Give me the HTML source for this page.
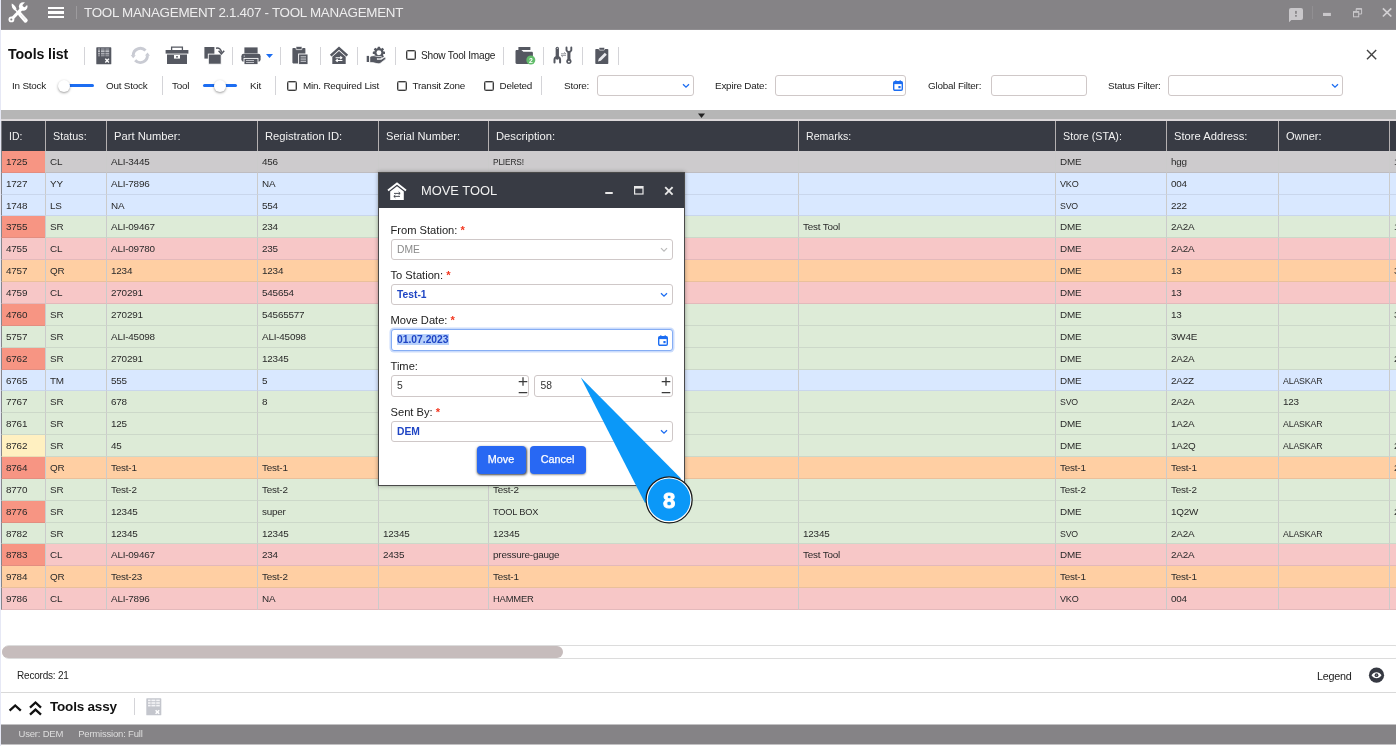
<!DOCTYPE html>
<html lang="en"><head><meta charset="utf-8"><title>Tool Management</title>
<style>
*{box-sizing:border-box;margin:0;padding:0}
html,body{width:1396px;height:746px;overflow:hidden;background:#fff;font-family:"Liberation Sans",sans-serif;color:#222}
.abs{position:absolute}
#app{will-change:transform;position:relative;width:1396px;height:746px;overflow:hidden;background:#fff}
#titlebar{position:absolute;left:1px;top:0;width:1395px;height:30px;background:#858386;border-bottom:1px solid #908e91}
#title{position:absolute;left:83px;top:4px;font-size:13.4px;color:rgba(255,255,255,.86);white-space:nowrap;letter-spacing:-0.28px;line-height:18px;font-weight:400}
.vsep{position:absolute;width:1px;background:#d4d4d8}
.lbl{position:absolute;font-size:9.9px;letter-spacing:-0.2px;color:#222;white-space:nowrap;line-height:12px}
.cb{position:absolute;width:10px;height:10px;border:1px solid #3c3c3c;border-radius:1.5px;background:#fff;box-shadow:inset 0 0 0 .5px #666}
.inp{position:absolute;height:21px;border:1px solid #cfc8c8;border-radius:3px;background:#fff}
.sl{position:absolute;height:2.6px;background:#1c6df2;border-radius:2px}
.knob{position:absolute;width:12px;height:12px;border-radius:50%;background:#fff;box-shadow:0 1px 2.5px rgba(0,0,0,.4)}
#strip{position:absolute;left:1px;top:110px;width:1395px;height:9px;background:#b6b6b6}
#thead{position:absolute;left:0;top:119px;width:1396px;height:32px;background:#383b44;border-top:2px solid #dcd8da}
.th{position:absolute;top:0;height:30px;border-left:1px solid #b4b0b1;color:#f2f2f2;font-size:11.2px;line-height:30px;padding-left:7px;white-space:nowrap;overflow:hidden}
#tbody{position:absolute;left:0;top:151px;width:1396px;height:459px;overflow:hidden}
.tr{position:absolute;left:0;width:1396px}
.td{position:absolute;top:0;height:100%;border-left:1px solid #cbcbcb;border-bottom:1px solid rgba(90,90,110,.13);font-size:9.9px;letter-spacing:-0.2px;line-height:21px;padding-left:4px;color:#2a2a2a;white-space:nowrap;overflow:hidden}
.td:first-child{border-left:1px solid #85868c;left:1px !important;width:44px !important}
.sel{background:#cdcbcd}.blue{background:#d9e8ff}.green{background:#ddebd7}.pink{background:#f7c7c7}.orange{background:#ffcfa3}
.td.hs{background:#f79583}.td.hy{background:#fff0c1}
#hscroll{position:absolute;left:2px;top:645px;width:1400px;height:14px;border:1px solid #dcdcdc;border-radius:7px;background:#fff}
#hthumb{position:absolute;left:2px;top:646px;width:561px;height:11.5px;border-radius:6px;background:#c6bcbc}
#statusbar{position:absolute;left:1px;top:724px;width:1395px;height:21px;background:#858386;border-top:1px solid #c2c1c3;border-bottom:1px solid #c2c1c3}
#modal{position:absolute;left:378px;top:172px;width:307px;height:314px;background:#fff;border:1px solid #4a4a4a;box-shadow:0 0 4px rgba(0,0,0,.35)}
#mhead{position:absolute;left:0;top:0;width:305px;height:35px;background:#383b44}
.ml{position:absolute;left:11.5px;font-size:11.15px;color:#222;white-space:nowrap;line-height:13px}
.ml i{color:#f3361f;font-style:normal;font-weight:bold}
.mi{position:absolute;left:11.5px;width:282px;height:21px;border:1px solid #cfc8c8;border-radius:3px;background:#fff;font-size:10.3px;line-height:19px;padding-left:5.5px;white-space:nowrap}
.btn{position:absolute;top:273px;height:28px;border-radius:4px;background:#2868f3;color:#fff;font-size:10.8px;line-height:27.5px;-webkit-text-stroke:0.25px #fff;text-align:center;box-shadow:0 1px 2px rgba(0,0,0,.4)}

.th:first-child{left:1px !important;width:44px !important;border-left-color:#7c7d83;padding-left:7px}
.sx{display:inline-block;transform-origin:0 50%}

</style></head>
<body>
<div id="app">
<div id="titlebar">
  <div id="title">TOOL MANAGEMENT 2.1.407 - TOOL MANAGEMENT</div>
</div>
<!--ICONS-TITLE-->
<!-- title bar icons -->
<svg class="abs" style="left:0px;top:0px" width="32" height="26" viewBox="0 0 32 26">
  <path d="M12.6 18.2L22 8.4" fill="none" stroke="#fff" stroke-width="3.1" stroke-linecap="butt"/>
  <circle cx="11.4" cy="19.4" r="2.9" fill="#fff"/>
  <circle cx="11.3" cy="19.5" r="1.05" fill="#858386"/>
  <circle cx="23.2" cy="6.5" r="4.3" fill="#fff"/><rect x="-1.7" y="-7" width="3.4" height="7.4" rx="1.2" transform="translate(23.5 6.2) rotate(45)" fill="#858386"/>
  <path d="M11.700 3.600c1.800.6 4 2.600 4.800 5.400l-1.600 1.400c-2.400-1-3.600-3.600-3.200-6.800z" fill="#fff"/>
  <path d="M15.200 9.600L20.400 15" fill="none" stroke="#fff" stroke-width="1.500"/>
  <path d="M20.200 14.300l5.400 6.200" fill="none" stroke="#fff" stroke-width="4.200" stroke-linecap="round"/>
  <path d="M21.800 13.400l4.800 5.600M20.600 14.600l4.600 5.400" fill="none" stroke="#858386" stroke-width="0.350" opacity=".6"/>
</svg>
<div class="abs" style="left:48px;top:7px;width:16px;height:2.1px;background:#fff"></div>
<div class="abs" style="left:48px;top:11.3px;width:16px;height:2.3px;background:#fff"></div>
<div class="abs" style="left:48px;top:16px;width:16px;height:2.1px;background:#fff"></div>
<div class="vsep" style="left:76px;top:5.5px;height:13px;background:#9d9b9e"></div>
<svg class="abs" style="left:1286px;top:5px" width="20" height="20" viewBox="1286 5 20 20"><path d="M1291 7.900h10a2 2 0 0 1 2 2v8.100a2 2 0 0 1-2 2h-9.600L1289 22.200V9.900a2 2 0 0 1 2-2z" fill="#c9c7ca"/><rect x="1295.100" y="10.900" width="1.700" height="2.900" fill="#858386"/><rect x="1295.100" y="15" width="1.700" height="1.700" fill="#858386"/></svg>
<div class="vsep" style="left:1312px;top:6px;height:13px;background:#918f92"></div>
<svg class="abs" style="left:1320px;top:10px" width="14" height="10" viewBox="1320 10 14 10"><rect x="1323" y="12.900" width="7.900" height="3.100" fill="#c9c7ca"/></svg>
<svg class="abs" style="left:1350px;top:6px" width="14" height="14" viewBox="1350 6 14 14" fill="none" stroke="#c9c7ca" stroke-width="1"><rect x="1353.500" y="11.600" width="5.200" height="5.200"/><rect x="1353.500" y="11.600" width="5.200" height="1.200" fill="#c9c7ca" stroke="none"/><path d="M1356.200 11.400V8.600h5.400v5.400h-2.800"/><rect x="1356.200" y="8.400" width="5.600" height="1.300" fill="#c9c7ca" stroke="none"/></svg>
<svg class="abs" style="left:1380px;top:6px" width="14" height="14" viewBox="1380 6 14 14" stroke="#d2d0d3" stroke-width="1.700"><path d="M1382.900 8.300l8.400 8.200M1391.300 8.300l-8.400 8.200"/></svg>

<!-- toolbar row 1 -->
<div class="abs" style="left:8px;top:44px;font-size:14.2px;font-weight:bold;color:#111;line-height:20px;white-space:nowrap;letter-spacing:-0.1px">Tools list</div>
<div class="vsep" style="left:84px;top:47px;height:18px"></div>
<!-- table-x icon -->
<svg class="abs" style="left:95.500px;top:46.500px" width="16" height="18" viewBox="0 0 16 18">
  <rect x="0.300" y="0.300" width="15" height="17" rx="0.600" fill="#555861"/>
  <g fill="#e9eaee"><rect x="2" y="1.500" width="2" height="1.100" opacity=".55"/><rect x="5" y="1.500" width="3.600" height="1.100" opacity=".55"/><rect x="9.400" y="1.500" width="3.800" height="1.100" opacity=".55"/>
  <rect x="2" y="3.500" width="2" height="1.200"/><rect x="5" y="3.500" width="3.600" height="1.200"/><rect x="9.400" y="3.500" width="3.800" height="1.200"/>
  <rect x="2" y="5.700" width="2" height="1.800" opacity=".6"/><rect x="5" y="5.700" width="3.600" height="1.800" opacity=".6"/><rect x="9.400" y="5.700" width="3.800" height="1.800" opacity=".6"/>
  <rect x="2" y="8.200" width="2" height="1.100" opacity=".5"/><rect x="5" y="8.200" width="3.600" height="1.100" opacity=".5"/><rect x="9.400" y="8.200" width="3.800" height="1.100" opacity=".5"/></g>
  <path d="M9.300 11.800l3.600 3.600M12.900 11.800l-3.600 3.600" stroke="#fff" stroke-width="1.400"/>
</svg>
<!-- refresh (disabled) -->
<svg class="abs" style="left:128px;top:43px" width="26" height="25" viewBox="128 43 26 25" fill="none">
  <path d="M145.54 50.56A7.1 7.1 0 0 0 133.25 55.52" stroke="#c9cbd3" stroke-width="2.900"/>
  <path d="M135.16 60.24A7.1 7.1 0 0 0 147.45 55.28" stroke="#c9cbd3" stroke-width="2.900"/>
  <path d="M133.14 58.35L130.76 55.06L135.75 55.24z" fill="#c9cbd3"/>
  <path d="M147.56 52.45L149.94 55.74L144.95 55.56z" fill="#c9cbd3"/>
</svg>
<!-- toolbox -->
<svg class="abs" style="left:165px;top:46px" width="24" height="19" viewBox="0 0 24 19">
  <path d="M6.6 4V1.2h10.8V4" fill="none" stroke="#555861" stroke-width="1.3"/>
  <rect x="0.6" y="4" width="22.8" height="3.600" fill="#555861"/>
  <rect x="2" y="8.500" width="20" height="9.500" fill="#555861"/>
  <rect x="9" y="9" width="6" height="3.6" fill="#fff"/>
  <rect x="11.2" y="10" width="1.6" height="1.6" fill="#555861"/>
</svg>
<!-- copy w/ arrow -->
<svg class="abs" style="left:204px;top:46px" width="21" height="19" viewBox="0 0 21 19">
  <rect x="0.4" y="1" width="10" height="11.6" fill="#555861"/>
  <rect x="4.300" y="8.100" width="12.900" height="10.100" fill="#555861" stroke="#fff" stroke-width="0.900"/>
  <path d="M12 2.200c3.400-.6 5.400 1.400 5.400 4.400" fill="none" stroke="#555861" stroke-width="1.500"/>
  <path d="M14.600 4.800l2.800 3 2.800-3" fill="none" stroke="#555861" stroke-width="1.600"/>
</svg>
<div class="vsep" style="left:232px;top:47px;height:18px"></div>
<!-- printer -->
<svg class="abs" style="left:241px;top:46.500px" width="20" height="18" viewBox="0 0 20 18">
  <rect x="3.4" y="0.4" width="13.2" height="6" fill="#555861"/>
  <rect x="0.4" y="6.8" width="19.2" height="8" rx="2.4" fill="#555861"/>
  <rect x="3" y="11.4" width="14" height="6.2" fill="#555861" stroke="#fff" stroke-width="0.9"/>
  <rect x="5" y="13" width="8" height="0.9" fill="#c8c9cf"/><rect x="5" y="15" width="8" height="0.9" fill="#c8c9cf"/>
  <rect x="2.6" y="8.6" width="1.4" height="1" fill="#c8c9cf"/>
</svg>
<svg class="abs" style="left:265.5px;top:53.5px" width="7" height="4" viewBox="0 0 7 4"><path d="M0 0h7L3.5 4z" fill="#1c6df2"/></svg>
<div class="vsep" style="left:280px;top:47px;height:18px"></div>
<!-- clipboard paste -->
<svg class="abs" style="left:292.400px;top:45.500px" width="17" height="19" viewBox="0 -1 17 19">
  <rect x="0.400" y="0.900" width="13" height="15.500" rx="0.800" fill="#555861"/>
  <rect x="4" y="-0.600" width="6" height="3.200" rx="0.600" fill="#555861" stroke="#fff" stroke-width="0.700"/>
  <rect x="6.600" y="7" width="9.400" height="10.600" fill="#555861" stroke="#fff" stroke-width="0.900"/>
  <rect x="8.600" y="9.400" width="5.400" height="0.900" fill="#e2e3e7"/><rect x="8.600" y="11.600" width="5.400" height="0.900" fill="#e2e3e7"/><rect x="8.600" y="13.800" width="5.400" height="0.900" fill="#e2e3e7"/>
</svg>
<div class="vsep" style="left:320px;top:47px;height:18px"></div>
<!-- house w/ arrows -->
<svg class="abs" style="left:329px;top:46px" width="20" height="19" viewBox="0 0 20 19">
  <path d="M1.700 9.600L10 2.100l8.300 7.500" fill="none" stroke="#555861" stroke-width="2.500"/>
  <path d="M3.300 10.700L10 5.100l6.700 5.600V18H3.300z" fill="#555861"/>
  <path d="M6.600 11.700h6.200M11.300 10.300l1.600 1.400-1.600 1.400" fill="none" stroke="#fff" stroke-width="1.100"/>
  <path d="M13.400 14.500H7.200M8.700 13.100l-1.600 1.400 1.600 1.400" fill="none" stroke="#fff" stroke-width="1.100"/>
</svg>
<div class="vsep" style="left:357px;top:47px;height:18px"></div>
<!-- hand with gear -->
<svg class="abs" style="left:364px;top:44px" width="24" height="22" viewBox="364 44 24 22">
  <g transform="translate(378.900 52.800)" fill="#555861">
    <circle r="4.700"/>
    <g><rect x="-1.250" y="-6.100" width="2.500" height="12.200" rx=".4"/><rect x="-1.250" y="-6.100" width="2.500" height="12.200" rx=".4" transform="rotate(45)"/><rect x="-1.250" y="-6.100" width="2.500" height="12.200" rx=".4" transform="rotate(90)"/><rect x="-1.250" y="-6.100" width="2.500" height="12.200" rx=".4" transform="rotate(135)"/></g>
    <circle r="2.450" fill="#fff"/>
  </g>
  <path d="M369.800 56.700c2.200-1.300 4.600-1.300 6.600-.3l4.600.2c1.400.1 1.400 2.100 0 2.200h-4v.4h4.600l2.400-1.700c1.300-.8 2.500.8 1.300 1.900l-4.500 3.500c-1.200.8-2.400 1-3.800.7l-4.300-1h-2.900z" fill="#555861" stroke="#fff" stroke-width="0.700"/>
  <rect x="366.700" y="55.900" width="2.300" height="6.100" fill="#555861"/>
</svg>
<div class="vsep" style="left:395px;top:47px;height:18px"></div>
<div class="cb" style="left:406px;top:49.5px"></div>
<div class="lbl" style="left:421px;top:49.600px;font-size:10.100px">Show Tool Image</div>
<div class="vsep" style="left:503px;top:47px;height:18px"></div>
<!-- folder with badge -->
<svg class="abs" style="left:514.5px;top:46px" width="22" height="20" viewBox="0 0 22 20">
  <path d="M3.4 1h12v3H3.400z" fill="#555861"/>
  <path d="M0.500 5.200c0-.8.500-1.300 1.300-1.300h4.600l2 1.800h8.200c.8 0 1.300.5 1.300 1.300v9.600c0 .8-.5 1.300-1.300 1.300H1.800c-.8 0-1.300-.5-1.300-1.300z" fill="#555861"/>
  <circle cx="15.800" cy="14" r="4.500" fill="#62bd6b"/>
  <text x="15.800" y="16.500" font-size="6.800" font-weight="bold" fill="#fff" text-anchor="middle" font-family="Liberation Sans, sans-serif">2</text>
</svg>
<div class="vsep" style="left:543px;top:47px;height:18px"></div>
<!-- wrenches -->
<svg class="abs" style="left:551px;top:44px" width="24" height="22" viewBox="551 44 24 22">
  <path d="M557.300 48.300V58" stroke="#555861" stroke-width="3.300" stroke-linecap="round" fill="none"/>
  <circle cx="557.300" cy="48.200" r="0.550" fill="#fff"/>
  <path d="M554.500 62.600v-2.900a2.800 2.800 0 0 1 5.600 0v2.900" stroke="#555861" stroke-width="2" fill="none" stroke-linecap="round"/>
  <path d="M568.900 52v8" stroke="#555861" stroke-width="3.100" fill="none"/>
  <path d="M566.500 47.500v2.700a2.500 2.500 0 0 0 4.800 0v-2.700" stroke="#555861" stroke-width="1.900" fill="none" stroke-linecap="round"/>
  <circle cx="568.900" cy="61.300" r="2.600" fill="#555861"/>
  <circle cx="568.900" cy="61.600" r="0.950" fill="#fff"/>
  <path d="M561 53.800h4.800l-1.600-1.500M566 55.400h-4.800l1.600 1.500" stroke="#8b8d94" stroke-width="0.900" fill="none"/>
</svg>
<div class="vsep" style="left:582px;top:47px;height:18px"></div>
<!-- clipboard with pencil -->
<svg class="abs" style="left:594.5px;top:46.500px" width="14" height="18" viewBox="0 0 14 18">
  <rect x="0.300" y="2" width="13" height="15" rx="0.800" fill="#555861"/>
  <rect x="4" y="0.400" width="5.600" height="2.800" rx="1" fill="#555861" stroke="#fff" stroke-width="0.600"/>
  <path d="M3 14.600l.8-2.800 6-6 2 2-6 6z" fill="#e9eaee"/>
</svg>
<div class="vsep" style="left:618px;top:47px;height:18px"></div>
<svg class="abs" style="left:1365px;top:48.400px" width="13" height="13" viewBox="0 0 13 13" stroke="#444" stroke-width="1.400"><path d="M2 2l9.200 9.200M11.200 2l-9.200 9.200"/></svg>

<!-- toolbar row 2 -->
<div class="lbl" style="left:12px;top:80px">In Stock</div>
<div class="sl" style="left:64px;top:84.400px;width:30px"></div>
<div class="knob" style="left:58px;top:79.5px"></div>
<div class="lbl" style="left:106px;top:80px">Out Stock</div>
<div class="vsep" style="left:162px;top:76px;height:19px"></div>
<div class="lbl" style="left:172px;top:80px">Tool</div>
<div class="sl" style="left:202.500px;top:84.400px;width:34.500px"></div>
<div class="knob" style="left:213.500px;top:79.500px"></div>
<div class="lbl" style="left:250px;top:80px">Kit</div>
<div class="vsep" style="left:275px;top:76px;height:19px"></div>
<div class="cb" style="left:287px;top:80.500px"></div>
<div class="lbl" style="left:303px;top:80px">Min. Required List</div>
<div class="cb" style="left:396.700px;top:80.600px"></div>
<div class="lbl" style="left:412.500px;top:80px">Transit Zone</div>
<div class="cb" style="left:484px;top:80.500px"></div>
<div class="lbl" style="left:499.500px;top:80px">Deleted</div>
<div class="vsep" style="left:541px;top:76px;height:19px"></div>
<div class="lbl" style="left:564px;top:80px">Store:</div>
<div class="inp" style="left:597px;top:75px;width:96.500px"></div>
<svg class="abs" style="left:682px;top:83px" width="8" height="6" viewBox="0 0 8 6" fill="none" stroke="#1c6df2" stroke-width="1.300"><path d="M1 1.200l3 3 3-3"/></svg>
<div class="lbl" style="left:715px;top:80px">Expire Date:</div>
<div class="inp" style="left:775px;top:75px;width:131px"></div>
<svg class="abs" style="left:893px;top:80px" width="10" height="11" viewBox="0 0 10 11"><rect x="0.700" y="1.700" width="8.600" height="8.600" rx="1.200" fill="none" stroke="#1c6df2" stroke-width="1.400"/><rect x="0.700" y="1.700" width="8.600" height="2.400" fill="#1c6df2"/><rect x="2.200" y="0.300" width="1.200" height="2" fill="#1c6df2"/><rect x="6.600" y="0.300" width="1.200" height="2" fill="#1c6df2"/><rect x="5.400" y="6" width="2.200" height="2.200" fill="#1c6df2"/></svg>
<div class="lbl" style="left:928px;top:80px">Global Filter:</div>
<div class="inp" style="left:990.500px;top:75px;width:96px"></div>
<div class="lbl" style="left:1108px;top:80px">Status Filter:</div>
<div class="inp" style="left:1168px;top:75px;width:174.500px"></div>
<svg class="abs" style="left:1331px;top:83px" width="8" height="6" viewBox="0 0 8 6" fill="none" stroke="#1c6df2" stroke-width="1.300"><path d="M1 1.200l3 3 3-3"/></svg>

<div id="strip"></div>
<svg class="abs" style="left:697px;top:112.800px" width="10" height="6" viewBox="0 0 10 6"><path d="M1 0.5h7L4.5 5z" fill="#222"/></svg>
<div id="thead"><div class="th" style="left:0px;width:45px"><span class="sx" style="transform:scaleX(0.93)">ID:</span></div><div class="th" style="left:45px;width:61px"><span class="sx" style="transform:scaleX(0.966)">Status:</span></div><div class="th" style="left:106px;width:151px"><span>Part Number:</span></div><div class="th" style="left:257px;width:121px"><span>Registration ID:</span></div><div class="th" style="left:378px;width:110px"><span class="sx" style="transform:scaleX(0.992)">Serial Number:</span></div><div class="th" style="left:488px;width:310px"><span>Description:</span></div><div class="th" style="left:798px;width:257px"><span class="sx" style="transform:scaleX(0.946)">Remarks:</span></div><div class="th" style="left:1055px;width:111px"><span class="sx" style="transform:scaleX(0.96)">Store (STA):</span></div><div class="th" style="left:1166px;width:112px"><span>Store Address:</span></div><div class="th" style="left:1278px;width:111px"><span class="sx" style="transform:scaleX(0.985)">Owner:</span></div><div class="th" style="left:1389px;width:111px"><span></span></div></div>
<div id="tbody">
<div class="tr sel" style="top:0px;height:22px"><div class="td hs" style="left:0px;width:45px"><span>1725</span></div><div class="td" style="left:45px;width:61px"><span>CL</span></div><div class="td" style="left:106px;width:151px"><span>ALI-3445</span></div><div class="td" style="left:257px;width:121px"><span>456</span></div><div class="td" style="left:378px;width:110px"><span></span></div><div class="td" style="left:488px;width:310px"><span class="sx" style="transform:scaleX(0.845)">PLIERS!</span></div><div class="td" style="left:798px;width:257px"><span></span></div><div class="td" style="left:1055px;width:111px"><span>DME</span></div><div class="td" style="left:1166px;width:112px"><span>hgg</span></div><div class="td" style="left:1278px;width:111px"><span></span></div><div class="td last" style="left:1389px;width:111px"><span>1</span></div></div>
<div class="tr blue" style="top:22px;height:22px"><div class="td" style="left:0px;width:45px"><span>1727</span></div><div class="td" style="left:45px;width:61px"><span>YY</span></div><div class="td" style="left:106px;width:151px"><span>ALI-7896</span></div><div class="td" style="left:257px;width:121px"><span>NA</span></div><div class="td" style="left:378px;width:110px"><span></span></div><div class="td" style="left:488px;width:310px"><span></span></div><div class="td" style="left:798px;width:257px"><span></span></div><div class="td" style="left:1055px;width:111px"><span class="sx" style="transform:scaleX(0.916)">VKO</span></div><div class="td" style="left:1166px;width:112px"><span>004</span></div><div class="td" style="left:1278px;width:111px"><span></span></div><div class="td last" style="left:1389px;width:111px"><span></span></div></div>
<div class="tr blue" style="top:44px;height:21px"><div class="td" style="left:0px;width:45px"><span>1748</span></div><div class="td" style="left:45px;width:61px"><span>LS</span></div><div class="td" style="left:106px;width:151px"><span>NA</span></div><div class="td" style="left:257px;width:121px"><span>554</span></div><div class="td" style="left:378px;width:110px"><span></span></div><div class="td" style="left:488px;width:310px"><span></span></div><div class="td" style="left:798px;width:257px"><span></span></div><div class="td" style="left:1055px;width:111px"><span class="sx" style="transform:scaleX(0.887)">SVO</span></div><div class="td" style="left:1166px;width:112px"><span>222</span></div><div class="td" style="left:1278px;width:111px"><span></span></div><div class="td last" style="left:1389px;width:111px"><span></span></div></div>
<div class="tr green" style="top:65px;height:22px"><div class="td hs" style="left:0px;width:45px"><span>3755</span></div><div class="td" style="left:45px;width:61px"><span>SR</span></div><div class="td" style="left:106px;width:151px"><span>ALI-09467</span></div><div class="td" style="left:257px;width:121px"><span>234</span></div><div class="td" style="left:378px;width:110px"><span></span></div><div class="td" style="left:488px;width:310px"><span></span></div><div class="td" style="left:798px;width:257px"><span>Test Tool</span></div><div class="td" style="left:1055px;width:111px"><span>DME</span></div><div class="td" style="left:1166px;width:112px"><span>2A2A</span></div><div class="td" style="left:1278px;width:111px"><span></span></div><div class="td last" style="left:1389px;width:111px"><span>1</span></div></div>
<div class="tr pink" style="top:87px;height:22px"><div class="td" style="left:0px;width:45px"><span>4755</span></div><div class="td" style="left:45px;width:61px"><span>CL</span></div><div class="td" style="left:106px;width:151px"><span>ALI-09780</span></div><div class="td" style="left:257px;width:121px"><span>235</span></div><div class="td" style="left:378px;width:110px"><span></span></div><div class="td" style="left:488px;width:310px"><span></span></div><div class="td" style="left:798px;width:257px"><span></span></div><div class="td" style="left:1055px;width:111px"><span>DME</span></div><div class="td" style="left:1166px;width:112px"><span>2A2A</span></div><div class="td" style="left:1278px;width:111px"><span></span></div><div class="td last" style="left:1389px;width:111px"><span></span></div></div>
<div class="tr orange" style="top:109px;height:22px"><div class="td" style="left:0px;width:45px"><span>4757</span></div><div class="td" style="left:45px;width:61px"><span>QR</span></div><div class="td" style="left:106px;width:151px"><span>1234</span></div><div class="td" style="left:257px;width:121px"><span>1234</span></div><div class="td" style="left:378px;width:110px"><span></span></div><div class="td" style="left:488px;width:310px"><span></span></div><div class="td" style="left:798px;width:257px"><span></span></div><div class="td" style="left:1055px;width:111px"><span>DME</span></div><div class="td" style="left:1166px;width:112px"><span>13</span></div><div class="td" style="left:1278px;width:111px"><span></span></div><div class="td last" style="left:1389px;width:111px"><span>3</span></div></div>
<div class="tr pink" style="top:131px;height:22px"><div class="td" style="left:0px;width:45px"><span>4759</span></div><div class="td" style="left:45px;width:61px"><span>CL</span></div><div class="td" style="left:106px;width:151px"><span>270291</span></div><div class="td" style="left:257px;width:121px"><span>545654</span></div><div class="td" style="left:378px;width:110px"><span></span></div><div class="td" style="left:488px;width:310px"><span></span></div><div class="td" style="left:798px;width:257px"><span></span></div><div class="td" style="left:1055px;width:111px"><span>DME</span></div><div class="td" style="left:1166px;width:112px"><span>13</span></div><div class="td" style="left:1278px;width:111px"><span></span></div><div class="td last" style="left:1389px;width:111px"><span></span></div></div>
<div class="tr green" style="top:153px;height:22px"><div class="td hs" style="left:0px;width:45px"><span>4760</span></div><div class="td" style="left:45px;width:61px"><span>SR</span></div><div class="td" style="left:106px;width:151px"><span>270291</span></div><div class="td" style="left:257px;width:121px"><span>54565577</span></div><div class="td" style="left:378px;width:110px"><span></span></div><div class="td" style="left:488px;width:310px"><span></span></div><div class="td" style="left:798px;width:257px"><span></span></div><div class="td" style="left:1055px;width:111px"><span>DME</span></div><div class="td" style="left:1166px;width:112px"><span>13</span></div><div class="td" style="left:1278px;width:111px"><span></span></div><div class="td last" style="left:1389px;width:111px"><span>3</span></div></div>
<div class="tr green" style="top:175px;height:22px"><div class="td" style="left:0px;width:45px"><span>5757</span></div><div class="td" style="left:45px;width:61px"><span>SR</span></div><div class="td" style="left:106px;width:151px"><span>ALI-45098</span></div><div class="td" style="left:257px;width:121px"><span>ALI-45098</span></div><div class="td" style="left:378px;width:110px"><span></span></div><div class="td" style="left:488px;width:310px"><span></span></div><div class="td" style="left:798px;width:257px"><span></span></div><div class="td" style="left:1055px;width:111px"><span>DME</span></div><div class="td" style="left:1166px;width:112px"><span>3W4E</span></div><div class="td" style="left:1278px;width:111px"><span></span></div><div class="td last" style="left:1389px;width:111px"><span></span></div></div>
<div class="tr green" style="top:197px;height:22px"><div class="td hs" style="left:0px;width:45px"><span>6762</span></div><div class="td" style="left:45px;width:61px"><span>SR</span></div><div class="td" style="left:106px;width:151px"><span>270291</span></div><div class="td" style="left:257px;width:121px"><span>12345</span></div><div class="td" style="left:378px;width:110px"><span></span></div><div class="td" style="left:488px;width:310px"><span></span></div><div class="td" style="left:798px;width:257px"><span></span></div><div class="td" style="left:1055px;width:111px"><span>DME</span></div><div class="td" style="left:1166px;width:112px"><span>2A2A</span></div><div class="td" style="left:1278px;width:111px"><span></span></div><div class="td last" style="left:1389px;width:111px"><span>2</span></div></div>
<div class="tr blue" style="top:219px;height:21px"><div class="td" style="left:0px;width:45px"><span>6765</span></div><div class="td" style="left:45px;width:61px"><span>TM</span></div><div class="td" style="left:106px;width:151px"><span>555</span></div><div class="td" style="left:257px;width:121px"><span>5</span></div><div class="td" style="left:378px;width:110px"><span></span></div><div class="td" style="left:488px;width:310px"><span></span></div><div class="td" style="left:798px;width:257px"><span></span></div><div class="td" style="left:1055px;width:111px"><span>DME</span></div><div class="td" style="left:1166px;width:112px"><span>2A2Z</span></div><div class="td" style="left:1278px;width:111px"><span class="sx" style="transform:scaleX(0.89)">ALASKAR</span></div><div class="td last" style="left:1389px;width:111px"><span></span></div></div>
<div class="tr green" style="top:240px;height:22px"><div class="td" style="left:0px;width:45px"><span>7767</span></div><div class="td" style="left:45px;width:61px"><span>SR</span></div><div class="td" style="left:106px;width:151px"><span>678</span></div><div class="td" style="left:257px;width:121px"><span>8</span></div><div class="td" style="left:378px;width:110px"><span></span></div><div class="td" style="left:488px;width:310px"><span></span></div><div class="td" style="left:798px;width:257px"><span></span></div><div class="td" style="left:1055px;width:111px"><span class="sx" style="transform:scaleX(0.887)">SVO</span></div><div class="td" style="left:1166px;width:112px"><span>2A2A</span></div><div class="td" style="left:1278px;width:111px"><span>123</span></div><div class="td last" style="left:1389px;width:111px"><span></span></div></div>
<div class="tr green" style="top:262px;height:22px"><div class="td" style="left:0px;width:45px"><span>8761</span></div><div class="td" style="left:45px;width:61px"><span>SR</span></div><div class="td" style="left:106px;width:151px"><span>125</span></div><div class="td" style="left:257px;width:121px"><span></span></div><div class="td" style="left:378px;width:110px"><span></span></div><div class="td" style="left:488px;width:310px"><span></span></div><div class="td" style="left:798px;width:257px"><span></span></div><div class="td" style="left:1055px;width:111px"><span>DME</span></div><div class="td" style="left:1166px;width:112px"><span>1A2A</span></div><div class="td" style="left:1278px;width:111px"><span class="sx" style="transform:scaleX(0.89)">ALASKAR</span></div><div class="td last" style="left:1389px;width:111px"><span></span></div></div>
<div class="tr green" style="top:284px;height:22px"><div class="td hy" style="left:0px;width:45px"><span>8762</span></div><div class="td" style="left:45px;width:61px"><span>SR</span></div><div class="td" style="left:106px;width:151px"><span>45</span></div><div class="td" style="left:257px;width:121px"><span></span></div><div class="td" style="left:378px;width:110px"><span></span></div><div class="td" style="left:488px;width:310px"><span></span></div><div class="td" style="left:798px;width:257px"><span></span></div><div class="td" style="left:1055px;width:111px"><span>DME</span></div><div class="td" style="left:1166px;width:112px"><span>1A2Q</span></div><div class="td" style="left:1278px;width:111px"><span class="sx" style="transform:scaleX(0.89)">ALASKAR</span></div><div class="td last" style="left:1389px;width:111px"><span>2</span></div></div>
<div class="tr orange" style="top:306px;height:22px"><div class="td hs" style="left:0px;width:45px"><span>8764</span></div><div class="td" style="left:45px;width:61px"><span>QR</span></div><div class="td" style="left:106px;width:151px"><span>Test-1</span></div><div class="td" style="left:257px;width:121px"><span>Test-1</span></div><div class="td" style="left:378px;width:110px"><span></span></div><div class="td" style="left:488px;width:310px"><span></span></div><div class="td" style="left:798px;width:257px"><span></span></div><div class="td" style="left:1055px;width:111px"><span>Test-1</span></div><div class="td" style="left:1166px;width:112px"><span>Test-1</span></div><div class="td" style="left:1278px;width:111px"><span></span></div><div class="td last" style="left:1389px;width:111px"><span>2</span></div></div>
<div class="tr green" style="top:328px;height:22px"><div class="td" style="left:0px;width:45px"><span>8770</span></div><div class="td" style="left:45px;width:61px"><span>SR</span></div><div class="td" style="left:106px;width:151px"><span>Test-2</span></div><div class="td" style="left:257px;width:121px"><span>Test-2</span></div><div class="td" style="left:378px;width:110px"><span></span></div><div class="td" style="left:488px;width:310px"><span>Test-2</span></div><div class="td" style="left:798px;width:257px"><span></span></div><div class="td" style="left:1055px;width:111px"><span>Test-2</span></div><div class="td" style="left:1166px;width:112px"><span>Test-2</span></div><div class="td" style="left:1278px;width:111px"><span></span></div><div class="td last" style="left:1389px;width:111px"><span></span></div></div>
<div class="tr green" style="top:350px;height:22px"><div class="td hs" style="left:0px;width:45px"><span>8776</span></div><div class="td" style="left:45px;width:61px"><span>SR</span></div><div class="td" style="left:106px;width:151px"><span>12345</span></div><div class="td" style="left:257px;width:121px"><span>super</span></div><div class="td" style="left:378px;width:110px"><span></span></div><div class="td" style="left:488px;width:310px"><span class="sx" style="transform:scaleX(0.934)">TOOL BOX</span></div><div class="td" style="left:798px;width:257px"><span></span></div><div class="td" style="left:1055px;width:111px"><span>DME</span></div><div class="td" style="left:1166px;width:112px"><span>1Q2W</span></div><div class="td" style="left:1278px;width:111px"><span></span></div><div class="td last" style="left:1389px;width:111px"><span>2</span></div></div>
<div class="tr green" style="top:372px;height:21px"><div class="td" style="left:0px;width:45px"><span>8782</span></div><div class="td" style="left:45px;width:61px"><span>SR</span></div><div class="td" style="left:106px;width:151px"><span>12345</span></div><div class="td" style="left:257px;width:121px"><span>12345</span></div><div class="td" style="left:378px;width:110px"><span>12345</span></div><div class="td" style="left:488px;width:310px"><span>12345</span></div><div class="td" style="left:798px;width:257px"><span>12345</span></div><div class="td" style="left:1055px;width:111px"><span class="sx" style="transform:scaleX(0.887)">SVO</span></div><div class="td" style="left:1166px;width:112px"><span>2A2A</span></div><div class="td" style="left:1278px;width:111px"><span class="sx" style="transform:scaleX(0.89)">ALASKAR</span></div><div class="td last" style="left:1389px;width:111px"><span></span></div></div>
<div class="tr pink" style="top:393px;height:22px"><div class="td hs" style="left:0px;width:45px"><span>8783</span></div><div class="td" style="left:45px;width:61px"><span>CL</span></div><div class="td" style="left:106px;width:151px"><span>ALI-09467</span></div><div class="td" style="left:257px;width:121px"><span>234</span></div><div class="td" style="left:378px;width:110px"><span>2435</span></div><div class="td" style="left:488px;width:310px"><span>pressure-gauge</span></div><div class="td" style="left:798px;width:257px"><span>Test Tool</span></div><div class="td" style="left:1055px;width:111px"><span>DME</span></div><div class="td" style="left:1166px;width:112px"><span>2A2A</span></div><div class="td" style="left:1278px;width:111px"><span></span></div><div class="td last" style="left:1389px;width:111px"><span></span></div></div>
<div class="tr orange" style="top:415px;height:22px"><div class="td" style="left:0px;width:45px"><span>9784</span></div><div class="td" style="left:45px;width:61px"><span>QR</span></div><div class="td" style="left:106px;width:151px"><span>Test-23</span></div><div class="td" style="left:257px;width:121px"><span>Test-2</span></div><div class="td" style="left:378px;width:110px"><span></span></div><div class="td" style="left:488px;width:310px"><span>Test-1</span></div><div class="td" style="left:798px;width:257px"><span></span></div><div class="td" style="left:1055px;width:111px"><span>Test-1</span></div><div class="td" style="left:1166px;width:112px"><span>Test-1</span></div><div class="td" style="left:1278px;width:111px"><span></span></div><div class="td last" style="left:1389px;width:111px"><span></span></div></div>
<div class="tr pink" style="top:437px;height:22px"><div class="td" style="left:0px;width:45px"><span>9786</span></div><div class="td" style="left:45px;width:61px"><span>CL</span></div><div class="td" style="left:106px;width:151px"><span>ALI-7896</span></div><div class="td" style="left:257px;width:121px"><span>NA</span></div><div class="td" style="left:378px;width:110px"><span></span></div><div class="td" style="left:488px;width:310px"><span class="sx" style="transform:scaleX(0.953)">HAMMER</span></div><div class="td" style="left:798px;width:257px"><span></span></div><div class="td" style="left:1055px;width:111px"><span class="sx" style="transform:scaleX(0.916)">VKO</span></div><div class="td" style="left:1166px;width:112px"><span>004</span></div><div class="td" style="left:1278px;width:111px"><span></span></div><div class="td last" style="left:1389px;width:111px"><span></span></div></div>

</div>
<div id="hscroll"></div><div id="hthumb"></div>
<div class="lbl" style="left:17px;top:669.6px;font-size:10px">Records: 21</div>
<div class="lbl" style="left:1317px;top:669.5px;font-size:10.8px;letter-spacing:-0.25px">Legend</div>
<div class="abs" style="left:1px;top:692px;width:1395px;height:1px;background:#d9d9d9"></div>
<svg class="abs" style="left:1367px;top:666px" width="19" height="19" viewBox="1367 666 19 19"><circle cx="1376.500" cy="675.200" r="7.600" fill="#363942"/><path d="M1371.500 675.200c2.300-3.900 7.700-3.900 10 0-2.300 3.900-7.700 3.900-10 0z" fill="#fff"/><circle cx="1376.500" cy="675.200" r="1.900" fill="#363942"/><circle cx="1376.500" cy="675.200" r="0.700" fill="#8a8c93"/></svg>
<svg class="abs" style="left:5px;top:696px" width="42" height="24" viewBox="5 696 42 24" fill="none" stroke="#111" stroke-width="2.300"><path d="M9.600 710.600L15.200 705.500L20.800 710.600"/><path d="M30 707.600L35.500 702.500L41 707.600M30 714.700L35.500 709.600L41 714.700"/></svg>
<div class="abs" style="left:50px;top:698px;font-size:13.500px;font-weight:bold;color:#111;line-height:18px;white-space:nowrap;letter-spacing:-0.200px">Tools assy</div>
<div class="vsep" style="left:134px;top:698px;height:17px"></div>
<svg class="abs" style="left:145.500px;top:697.500px" width="16" height="18" viewBox="0 0 16 18">
  <rect x="0.300" y="0.300" width="15" height="17" rx="0.600" fill="#c4c6cd"/>
  <g fill="#f4f4f7"><rect x="2" y="1.600" width="2.600" height="1.600"/><rect x="5.400" y="1.600" width="4" height="1.600"/><rect x="10.200" y="1.600" width="3.600" height="1.600"/>
  <rect x="2" y="4.200" width="2.600" height="1.600"/><rect x="5.400" y="4.200" width="4" height="1.600"/><rect x="10.200" y="4.200" width="3.600" height="1.600"/>
  <rect x="2" y="6.800" width="2.600" height="1.600"/><rect x="5.400" y="6.800" width="4" height="1.600"/><rect x="10.200" y="6.800" width="3.600" height="1.600"/></g>
  <path d="M9.600 12.200l3.600 3.600M13.200 12.200l-3.600 3.600" stroke="#fff" stroke-width="1.500"/>
</svg>

<div id="statusbar">
  <div class="lbl" style="left:17.5px;top:2.800px;font-size:9.500px;color:#dedede">User: DEM</div>
  <div class="lbl" style="left:77.200px;top:2.800px;font-size:9.500px;color:#dedede">Permission: Full</div>
</div>
<div id="modal">
  <div id="mhead">
    <svg class="abs" style="left:8px;top:9px" width="20" height="19" viewBox="0 0 20 19">
      <path d="M1 8.600L10 1.400l9 7.200" fill="none" stroke="#fff" stroke-width="1.900"/>
      <path d="M3.200 9.600L10 4.200l6.800 5.400V18H3.200z" fill="#fff"/>
      <path d="M7 11.400h6M11.600 10l1.600 1.400-1.600 1.400" fill="none" stroke="#383b44" stroke-width="0.900"/>
      <path d="M13 14.400H7M8.400 13l-1.600 1.400 1.600 1.400" fill="none" stroke="#383b44" stroke-width="0.900"/>
    </svg>
    <div class="abs" style="left:42px;top:8.800px;font-size:12.900px;color:#f2f2f2;line-height:18px;white-space:nowrap">MOVE TOOL</div>
    <div class="abs" style="left:226px;top:18.500px;width:8px;height:2.600px;background:#e8e8e8;border-radius:1px"></div>
    <svg class="abs" style="left:255px;top:13px" width="10" height="9" viewBox="0 0 10 9"><rect x="0.600" y="0.600" width="8.400" height="7.400" fill="none" stroke="#e8e8e8" stroke-width="1.200"/><rect x="0.600" y="0.600" width="8.400" height="2" fill="#e8e8e8"/></svg>
    <svg class="abs" style="left:285px;top:13px" width="10" height="10" viewBox="0 0 10 10" stroke="#e8e8e8" stroke-width="1.900"><path d="M1.200 1.200l7.400 7.400M8.600 1.200l-7.400 7.400"/></svg>
  </div>
  <div class="ml" style="top:50.8px">From Station: <i>*</i></div>
  <div class="mi" style="top:66px;color:#8a8a8a">DME</div>
  <svg class="abs" style="left:281.100px;top:74px" width="8" height="6" viewBox="0 0 8 6" fill="none" stroke="#bbb" stroke-width="1.200"><path d="M1 1.200l3 3 3-3"/></svg>
  <div class="ml" style="top:95.8px">To Station: <i>*</i></div>
  <div class="mi" style="top:111px;color:#1f45c4;font-weight:bold">Test-1</div>
  <svg class="abs" style="left:281.100px;top:119px" width="8" height="6" viewBox="0 0 8 6" fill="none" stroke="#1c6df2" stroke-width="1.300"><path d="M1 1.200l3 3 3-3"/></svg>
  <div class="ml" style="top:140.8px">Move Date: <i>*</i></div>
  <div class="mi" style="top:156px;height:22px;line-height:20.5px;border-color:#86adf4;box-shadow:0 0 0 1.5px #cbdcfb;color:#1f45c4;font-weight:bold"><span style="background:#b7d0fa">01.07.2023</span></div>
  <svg class="abs" style="left:279px;top:161.500px" width="10" height="11" viewBox="0 0 10 11"><rect x="0.700" y="1.700" width="8.600" height="8.600" rx="1.200" fill="none" stroke="#1c6df2" stroke-width="1.400"/><rect x="0.700" y="1.700" width="8.600" height="2.400" fill="#1c6df2"/><rect x="2.200" y="0.300" width="1.200" height="2" fill="#1c6df2"/><rect x="6.600" y="0.300" width="1.200" height="2" fill="#1c6df2"/><rect x="5.400" y="6" width="2.200" height="2.200" fill="#1c6df2"/></svg>
  <div class="ml" style="top:186.8px">Time:</div>
  <div class="mi" style="top:202px;width:138px;height:22px;color:#333">5</div>
  <div class="mi" style="top:202px;left:155px;width:139px;height:22px;color:#333">58</div>
  <svg class="abs" style="left:138.500px;top:201px" width="10" height="22" viewBox="0 0 10 22" stroke="#3a3a3a" stroke-width="1.250"><path d="M0.700 7.500h8.600M5 3.200v8.600M0.700 18.500h8.600"/></svg>
  <svg class="abs" style="left:282.200px;top:201px" width="10" height="22" viewBox="0 0 10 22" stroke="#3a3a3a" stroke-width="1.250"><path d="M0.700 7.500h8.600M5 3.200v8.600M0.700 18.500h8.600"/></svg>
  <div class="ml" style="top:232.8px">Sent By: <i>*</i></div>
  <div class="mi" style="top:248px;color:#1f45c4;font-weight:bold">DEM</div>
  <svg class="abs" style="left:281.100px;top:256px" width="8" height="6" viewBox="0 0 8 6" fill="none" stroke="#1c6df2" stroke-width="1.300"><path d="M1 1.200l3 3 3-3"/></svg>
  <div class="btn" style="left:97.500px;width:49px;box-shadow:0.5px 1px 2.5px rgba(0,0,0,.75)">Move</div>
  <div class="btn" style="left:150.500px;width:56px">Cancel</div>
</div>
<!-- callout -->
<svg class="abs" style="left:570px;top:370px" width="130" height="160" viewBox="570 370 130 160">
  <path d="M580.800 377.400L681 478.500 645 503z" fill="#0b98f8"/>
  <circle cx="669.100" cy="499.800" r="23.050" fill="#fff" stroke="#1a1a1a" stroke-width="1.250"/>
  <circle cx="669.100" cy="499.800" r="21.300" fill="#0b98f8"/>
  <text x="669" y="508" font-size="22" font-weight="bold" fill="#fff" stroke="#fff" stroke-width="0.9" text-anchor="middle" font-family="Liberation Sans, sans-serif">8</text>
</svg>

<!--CALLOUT-->
<div class="abs" style="left:0;top:0;width:1px;height:746px;background:#e6e8f5"></div>

</div>
</body></html>
